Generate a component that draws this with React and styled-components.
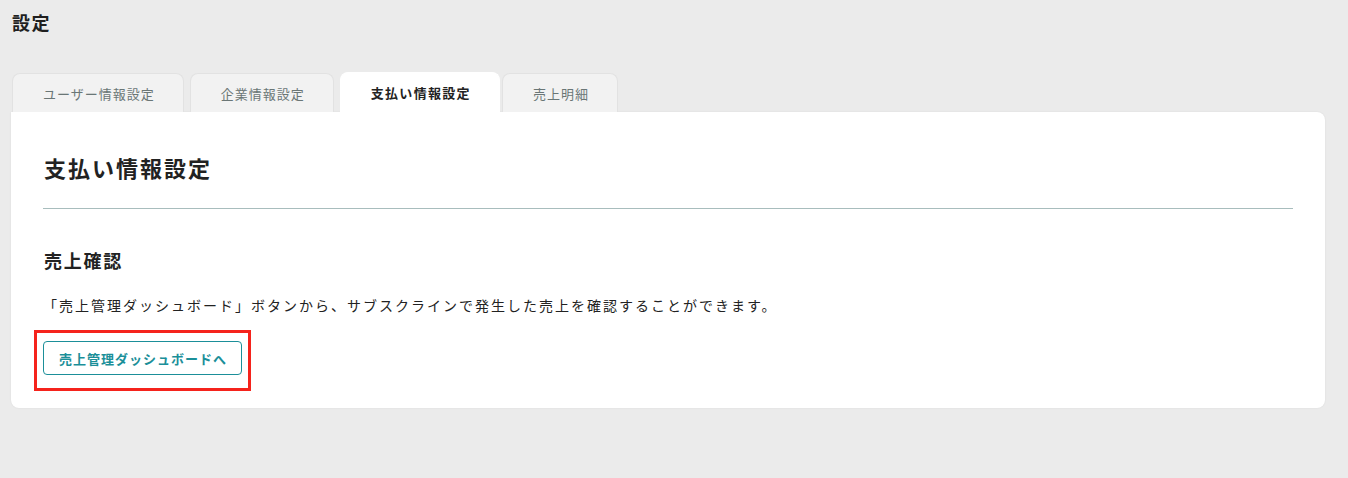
import React from "react";
import styled, { createGlobalStyle } from "styled-components";

const GlobalStyle = createGlobalStyle`
  body {
    margin: 0;
    background: #ebebeb;
    font-family: "Noto Sans CJK JP", "Noto Sans", sans-serif;
    color: #222;
  }
`;

const tabs = ["ユーザー情報設定", "企業情報設定", "支払い情報設定", "売上明細"];

function App() {
  return (
    <>
      <GlobalStyle />
      <Page>
        <PageTitle>設定</PageTitle>
        <TabBar>
          {tabs.map((t, i) => (
            <Tab key={t} active={i === 2}>
              {t}
            </Tab>
          ))}
        </TabBar>
        <Card>
          <Heading>支払い情報設定</Heading>
          <Divider />
          <SectionTitle>売上確認</SectionTitle>
          <Description>
            「売上管理ダッシュボード」ボタンから、サブスクラインで発生した売上を確認することができます。
          </Description>
          <ButtonWrap>
            <OutlineButton>売上管理ダッシュボードへ</OutlineButton>
            <Highlight />
          </ButtonWrap>
        </Card>
      </Page>
    </>
  );
}

export default App;

const Page = styled.div`
  padding: 8px 23px 40px 11px;
`;

const PageTitle = styled.h1`
  margin: 0 0 0 1px;
  font-size: 18px;
  font-weight: 700;
  line-height: 28px;
  letter-spacing: 1.5px;
  color: #1f1f1f;
`;

const TabBar = styled.div`
  display: flex;
  align-items: flex-end;
  gap: 6px;
  margin-top: 36px;
  padding-left: 1px;
`;

const Tab = styled.div`
  height: ${(p) => (p.active ? "40px" : "39px")};
  box-sizing: border-box;
  padding: 0 28px 0 30px;
  display: flex;
  align-items: center;
  justify-content: center;
  font-size: 13px;
  letter-spacing: ${(p) => (p.active ? "1.3px" : "1px")};
  font-weight: ${(p) => (p.active ? 700 : 400)};
  color: ${(p) => (p.active ? "#222" : "#6a7676")};
  background: ${(p) => (p.active ? "#fff" : "#f2f2f2")};
  border: 1px solid ${(p) => (p.active ? "#fff" : "#e2e2e2")};
  border-bottom: none;
  border-radius: 8px 8px 0 0;
  margin-right: ${(p) => (p.active ? "-4px" : "0")};
`;

const Card = styled.div`
  background: #fff;
  border-radius: 0 8px 8px 8px;
  box-shadow: 0 0 2px rgba(0, 0, 0, 0.08);
  padding: 39px 32px 33px 32px;
`;

const Heading = styled.h2`
  margin: 0 0 24px 1px;
  font-size: 22px;
  font-weight: 700;
  line-height: 33px;
  letter-spacing: 2px;
  color: #222;
`;

const Divider = styled.hr`
  margin: 0;
  border: none;
  border-top: 1px solid #a8bdbd;
`;

const SectionTitle = styled.h3`
  margin: 38px 0 0 1px;
  font-size: 18px;
  font-weight: 700;
  line-height: 27px;
  letter-spacing: 1.75px;
  color: #222;
`;

const Description = styled.p`
  margin: 21px 0 0 0;
  font-size: 14px;
  line-height: 21px;
  letter-spacing: 2px;
  color: #222;
`;

const ButtonWrap = styled.div`
  position: relative;
  display: inline-block;
  margin-top: 25px;
`;

const OutlineButton = styled.button`
  height: 34px;
  padding: 0 14px 0 15px;
  background: #fff;
  border: 1px solid #1b8f99;
  border-radius: 4px;
  color: #1b8f99;
  font-family: inherit;
  font-size: 13px;
  font-weight: 700;
  letter-spacing: 1px;
  cursor: pointer;
`;

const Highlight = styled.div`
  position: absolute;
  top: -11px;
  left: -9px;
  width: 217px;
  height: 61px;
  box-sizing: border-box;
  border: 3px solid #f5231c;
  pointer-events: none;
`;
